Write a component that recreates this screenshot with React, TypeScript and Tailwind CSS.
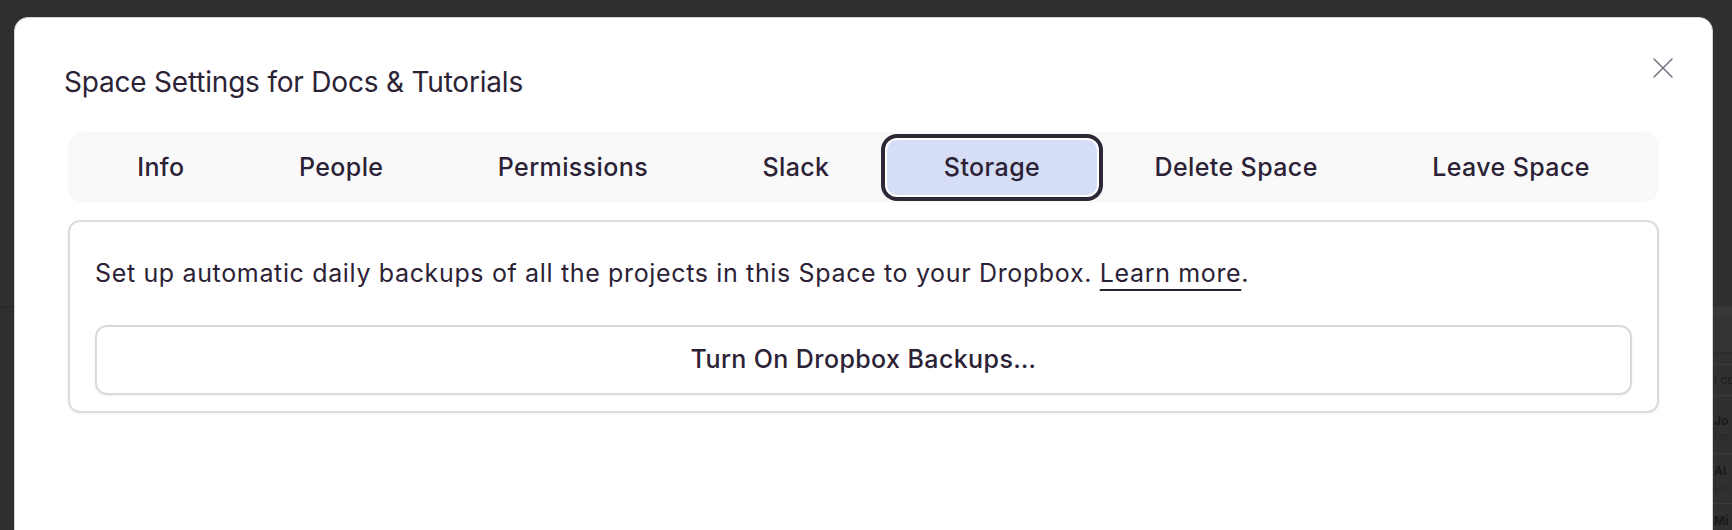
import React from 'react';

const tabs = ['Info', 'People', 'Permissions', 'Slack', 'Storage', 'Delete Space', 'Leave Space'];

const people = [
  { name: 'Jo', sub: 'On' },
  { name: 'Al', sub: 'Lo' },
  { name: 'Mi', sub: 'Ma' },
];

function BackgroundSidebar() {
  return (
    <div className="w-[46px] h-full bg-[#303030] flex flex-col whitespace-nowrap overflow-hidden">
      <div className="h-[307px] shrink-0" />
      <div className="h-[10px] shrink-0 bg-[#383838]" />
      <div className="h-[36px] shrink-0 bg-[#333333] border-b border-[#2a2a2a]" />
      <div className="h-[12px] shrink-0 border-b border-[#3a3a3a]" />
      <div className="h-[31px] shrink-0 pl-[24px] flex items-center text-[12px] text-[#1e1e1e] border-b border-[#3a3a3a]">h co</div>
      <div className="h-[8px] shrink-0" />
      {people.map((p) => (
        <div key={p.name} className="h-[50px] shrink-0 flex items-center gap-[6px] border-b border-[#3a3a3a]">
          <div className="w-[22px] h-[22px] rounded-full bg-[#2b2b2b] shrink-0" />
          <div className="flex flex-col leading-[17px]">
            <span className="text-[12px] font-bold text-[#1a1a1a]">{p.name}</span>
            <span className="text-[11px] text-[#262626]">{p.sub}</span>
          </div>
        </div>
      ))}
    </div>
  );
}

export default function App() {
  const active = 'Storage';

  return (
    <div className="relative h-[530px] w-full overflow-hidden bg-[#2f2f2f] font-['Inter','Noto_Sans',sans-serif] text-[#2c2236]">
      <div className="flex h-full">
        <div className="flex-1 flex flex-col">
          <div className="h-[306px]" />
          <div className="h-[2px] bg-[#2a2a2a]" />
        </div>
        <BackgroundSidebar />
      </div>

      {/* modal */}
      <div className="absolute left-[14px] top-[17px] w-[1699px] h-[560px] bg-white rounded-[14px] border border-[#d4d4d4] px-[53px]">
        <button className="absolute right-[38px] top-[39px] w-[22px] h-[22px] flex items-center justify-center text-[#756f80]">
          <svg width="22" height="22" viewBox="0 0 22 22" fill="none" stroke="currentColor" strokeWidth="1.5" strokeLinecap="round">
            <path d="M2 2L20 20M20 2L2 20" />
          </svg>
        </button>

        <h2 className="pt-[46px] -ml-[4px] text-[28px] leading-[36px] font-normal tracking-[-0.2px]">
          Space Settings for Docs &amp; Tutorials
        </h2>

        <div className="mt-[32px] h-[71px] rounded-[16px] bg-[#f9f9f9] px-[12px] py-[8px] flex">
          {tabs.map((t) => (
            <button
              key={t}
              className={
                t === active
                  ? 'flex-auto h-[55px] rounded-[10px] bg-[#d6def5] text-[25px] tracking-[0.4px] font-medium ring-4 ring-[#2e2836] ring-offset-2 ring-offset-white'
                  : 'flex-auto h-[55px] rounded-[10px] text-[25px] tracking-[0.4px] font-medium'
              }
            >
              {t}
            </button>
          ))}
        </div>

        <div className="mt-[17px] rounded-[12px] border-2 border-[#dcdcdc] shadow-[0_1px_3px_rgba(0,0,0,0.06)] px-[25px] pt-[33px] pb-[16px]">
          <p className="text-[25px] leading-[36px] tracking-[0.65px]">
            Set up automatic daily backups of all the projects in this Space to your Dropbox.{' '}
            <a className="underline decoration-2 underline-offset-[7px]">Learn more</a>.
          </p>
          <button className="mt-[34px] w-full h-[70px] rounded-[12px] border-2 border-[#dadada] bg-white shadow-[0_1px_3px_rgba(0,0,0,0.05)] text-[25px] tracking-[0.4px] font-medium">
            Turn On Dropbox Backups…
          </button>
        </div>
      </div>
    </div>
  );
}
